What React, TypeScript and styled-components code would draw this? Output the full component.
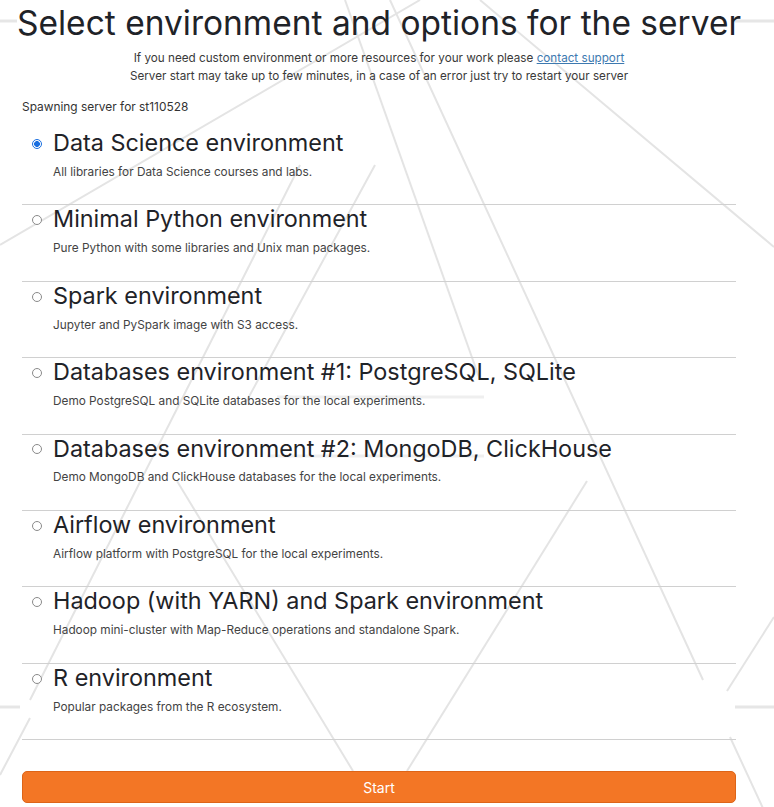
import React, { useState } from "react";
import styled, { createGlobalStyle } from "styled-components";

const GlobalStyle = createGlobalStyle`
  html, body {
    margin: 0;
    padding: 0;
    background: #ffffff;
  }
  body {
    font-family: Inter, "Noto Sans", "Liberation Sans", sans-serif;
    color: #222222;
  }
  * { box-sizing: border-box; }
`;

const Page = styled.div`
  position: relative;
  width: 774px;
  min-height: 807px;
  overflow: hidden;
`;

const Backdrop = styled.svg`
  position: absolute;
  left: 0;
  top: 0;
  width: 774px;
  height: 807px;
  pointer-events: none;
  z-index: 0;
`;

const Content = styled.main`
  position: relative;
  z-index: 1;
  padding: 3px 38px 0 22px;
  display: flex;
  flex-direction: column;
`;

const Title = styled.h1`
  margin: 0 -10px;
  font-size: 33.5px;
  line-height: 40px;
  font-weight: 400;
  text-align: center;
  color: #1f2328;
  white-space: nowrap;
`;

const Notes = styled.div`
  margin-top: 6px;
  display: flex;
  flex-direction: column;
  align-items: center;
`;

const Note = styled.p`
  margin: 0;
  font-size: 11.7px;
  line-height: 18px;
  color: #3a3a3a;
`;

const SupportLink = styled.a`
  color: #3d79b0;
  text-decoration: underline;
`;

const Spawning = styled.p`
  margin: 13px 0 0 0;
  font-size: 11.9px;
  line-height: 18px;
  color: #333333;
`;

const OptionList = styled.ul`
  list-style: none;
  margin: 13px 0 0 0;
  padding: 0;
  display: flex;
  flex-direction: column;
`;

const OptionItem = styled.li`
  border-bottom: 1px solid #d0d0d0;
  padding: 0 0 23.6px 10px;
  display: flex;
  flex-direction: column;
  gap: 5px;
  cursor: pointer;
`;

const OptionHead = styled.label`
  display: flex;
  align-items: center;
  gap: 11px;
  cursor: pointer;
`;

const Radio = styled.input.attrs({ type: "radio" })`
  appearance: none;
  -webkit-appearance: none;
  margin: 1px 0 0 0;
  width: 10px;
  height: 10px;
  flex: 0 0 10px;
  border-radius: 50%;
  border: 1px solid #8a8a8a;
  background: #ffffff;
  &:checked {
    border-color: #1a6fe0;
    background: radial-gradient(circle, #1a6fe0 0 2.6px, #ffffff 3.2px);
  }
`;

const OptionTitle = styled.span`
  font-size: 23.4px;
  line-height: 28.8px;
  font-weight: 400;
  color: #1f2328;
`;

const OptionDesc = styled.p`
  margin: 0 0 0 21px;
  font-size: 11.8px;
  line-height: 18px;
  color: #434343;
`;

const StartButton = styled.button`
  margin-top: 31px;
  height: 32px;
  width: 100%;
  border: 1px solid #dd6418;
  border-radius: 5px;
  background: #f37625;
  color: #ffffff;
  font-family: Inter, "Noto Sans", "Liberation Sans", sans-serif;
  font-size: 14px;
  font-weight: 400;
  cursor: pointer;
`;

const options = [
  { id: "ds", title: "Data Science environment", desc: "All libraries for Data Science courses and labs." },
  { id: "min", title: "Minimal Python environment", desc: "Pure Python with some libraries and Unix man packages." },
  { id: "spark", title: "Spark environment", desc: "Jupyter and PySpark image with S3 access." },
  { id: "db1", title: "Databases environment #1: PostgreSQL, SQLite", desc: "Demo PostgreSQL and SQLite databases for the local experiments." },
  { id: "db2", title: "Databases environment #2: MongoDB, ClickHouse", desc: "Demo MongoDB and ClickHouse databases for the local experiments." },
  { id: "airflow", title: "Airflow environment", desc: "Airflow platform with PostgreSQL for the local experiments." },
  { id: "hadoop", title: "Hadoop (with YARN) and Spark environment", desc: "Hadoop mini-cluster with Map-Reduce operations and standalone Spark." },
  { id: "r", title: "R environment", desc: "Popular packages from the R ecosystem." },
];

const thinLines: [number, number, number, number][] = [
  [420, 0, 0, 245],
  [390, 0, 703, 680],
  [730, 737, 774, 832],
  [480, 0, 774, 247],
  [345, 0, 480, 380],
  [375, 165, 245, 404],
  [300, 165, 30, 700],
  [587, 481, 407, 771],
  [177, 481, 353, 771],
  [774, 617, 727, 691],
  [30, 718, 0, 775],
];

const thickLines: [number, number, number, number][] = [
  [0, 21, 17, 21],
  [735, 21, 774, 21],
  [0, 707, 20, 707],
  [735, 707, 774, 707],
];

const faintBars: [number, number, number, number][] = [
  [277, 397, 484, 397],
  [267, 456, 484, 456],
];

export default function App() {
  const [selected, setSelected] = useState("ds");
  return (
    <>
      <GlobalStyle />
      <Page>
        <Backdrop viewBox="0 0 774 807" aria-hidden="true">
          {thinLines.map(([x1, y1, x2, y2], i) => (
            <line key={`t${i}`} x1={x1} y1={y1} x2={x2} y2={y2} stroke="#e4e4e4" strokeWidth={2} />
          ))}
          {thickLines.map(([x1, y1, x2, y2], i) => (
            <line key={`h${i}`} x1={x1} y1={y1} x2={x2} y2={y2} stroke="#e6e6e6" strokeWidth={3} />
          ))}
          {faintBars.map(([x1, y1, x2, y2], i) => (
            <line key={`f${i}`} x1={x1} y1={y1} x2={x2} y2={y2} stroke="#efefef" strokeWidth={3} />
          ))}
        </Backdrop>
        <Content>
          <Title>Select environment and options for the server</Title>
          <Notes>
            <Note>
              If you need custom environment or more resources for your work please{" "}
              <SupportLink href="#support">contact support</SupportLink>
            </Note>
            <Note>Server start may take up to few minutes, in a case of an error just try to restart your server</Note>
          </Notes>
          <Spawning>Spawning server for st110528</Spawning>
          <OptionList>
            {options.map((o) => (
              <OptionItem key={o.id} onClick={() => setSelected(o.id)}>
                <OptionHead>
                  <Radio name="profile" value={o.id} checked={selected === o.id} onChange={() => setSelected(o.id)} />
                  <OptionTitle>{o.title}</OptionTitle>
                </OptionHead>
                <OptionDesc>{o.desc}</OptionDesc>
              </OptionItem>
            ))}
          </OptionList>
          <StartButton type="button">Start</StartButton>
        </Content>
      </Page>
    </>
  );
}
